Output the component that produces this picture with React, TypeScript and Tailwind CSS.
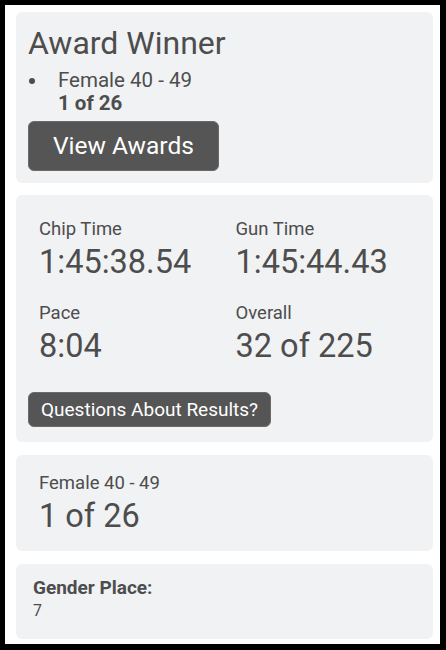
import React from 'react';

const stats = [
  { label: 'Chip Time', value: '1:45:38.54' },
  { label: 'Gun Time', value: '1:45:44.43' },
  { label: 'Pace', value: '8:04' },
  { label: 'Overall', value: '32 of 225' },
];

const App = () => {
  return (
    <div
      className="h-[650px] w-[446px] bg-black pt-[5px] pl-[5px] pr-[6px] pb-[6px] text-[#4d4d4d]"
      style={{ fontFamily: 'Roboto, "Liberation Sans", sans-serif' }}
    >
      <div className="h-full bg-white pt-[7px] pl-[11px] pr-[7px]">
        {/* award */}
        <div className="rounded-md bg-[#f1f2f4] px-3 pt-3 pb-3">
          <h2 className="text-[32px] leading-[38px]">Award Winner</h2>
          <div className="mt-[7px] flex text-[20.5px] leading-[23px]">
            <span className="w-[30px] shrink-0 pl-[1px] pt-[9px]">
              <span className="block h-[6px] w-[6px] rounded-full bg-[#4d4d4d]" />
            </span>
            <div>
              <div>Female 40 - 49</div>
              <div className="font-bold">1 of 26</div>
            </div>
          </div>
          <button className="mt-[6px] h-[50px] rounded-md border border-[#6a6a6a] bg-[#555555] px-6 text-[24.5px] text-white">
            View Awards
          </button>
        </div>

        {/* times */}
        <div className="mt-3 rounded-md bg-[#f1f2f4] px-3 pt-[21px] pb-[15px]">
          <div className="grid grid-cols-2 gap-y-[19px]">
            {stats.map((s) => (
              <div key={s.label} className="px-[11px]">
                <div className="text-[18.5px] leading-[27px]">{s.label}</div>
                <div className="text-[32.5px] leading-[38px]">{s.value}</div>
              </div>
            ))}
          </div>
          <button className="mt-[27px] rounded-md border border-[#6a6a6a] bg-[#555555] px-3 py-1 text-[19px] leading-[25px] text-white">
            Questions About Results?
          </button>
        </div>

        {/* division */}
        <div className="mt-[13px] rounded-md bg-[#f1f2f4] pl-[23px] pr-3 pt-[15px] pb-[16px]">
          <div className="text-[18.5px] leading-[27px]">Female 40 - 49</div>
          <div className="text-[32.5px] leading-[38px]">1 of 26</div>
        </div>

        {/* gender */}
        <div className="mt-[13px] rounded-md bg-[#f1f2f4] pl-[17px] pr-3 pt-[13px] pb-[16px]">
          <div className="text-[19px] font-bold leading-[22px]">Gender Place:</div>
          <div className="text-[16px] leading-[24px]">7</div>
        </div>
      </div>
    </div>
  );
};

export default App;
